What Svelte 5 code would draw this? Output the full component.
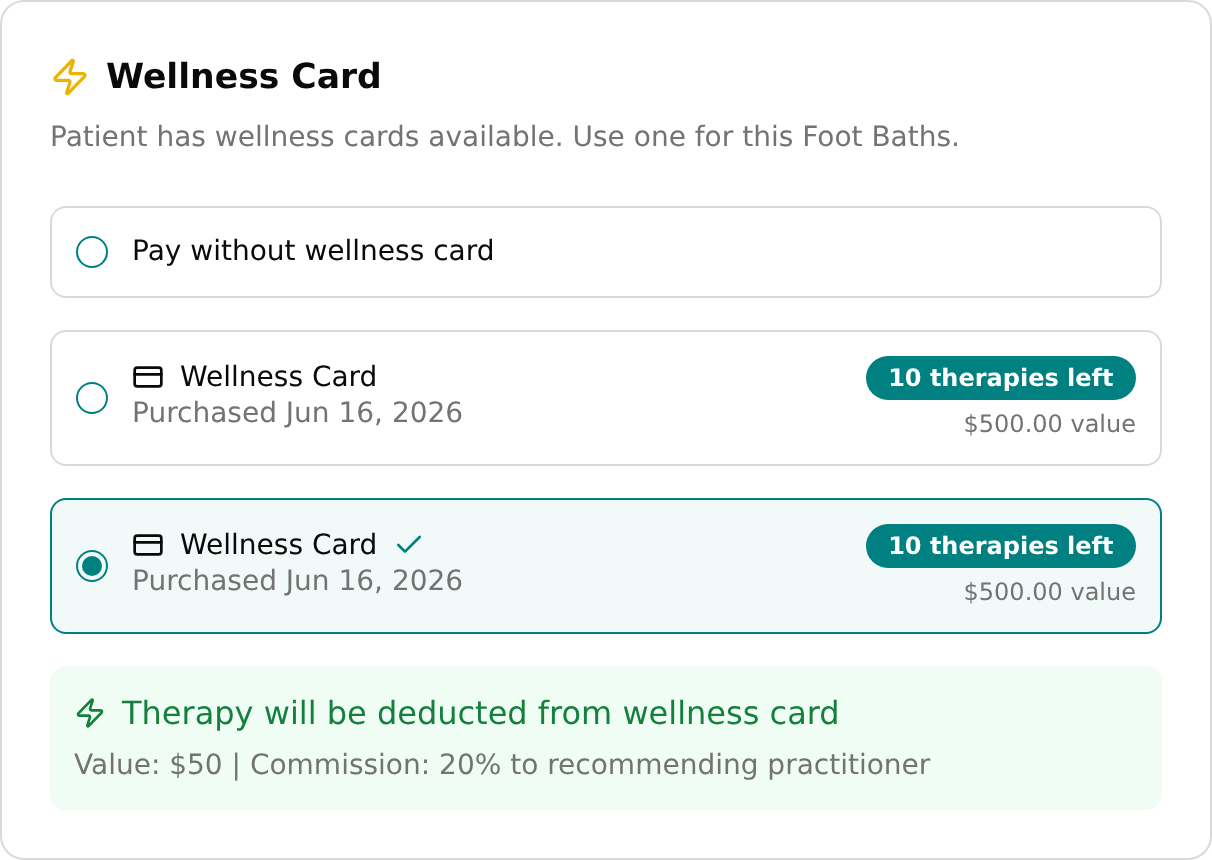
<script>
const options = [
  { id: 'card-1', selected: false },
  { id: 'card-2', selected: true }
];
const zap = 'M4 14a1 1 0 0 1-.78-1.63l9.9-10.2a.5.5 0 0 1 .86.46l-1.92 6.02A1 1 0 0 0 13 10h7a1 1 0 0 1 .78 1.63l-9.9 10.2a.5.5 0 0 1-.86-.46l1.92-6.02A1 1 0 0 0 11 14z';
</script>

<div class="card">
  <header class="head">
    <h2 class="title">
      <svg class="zap-lg" viewBox="0 0 24 24"><path d={zap} /></svg>
      Wellness Card
    </h2>
    <p class="desc">Patient has wellness cards available. Use one for this Foot Baths.</p>
  </header>

  <div class="list">
    <div class="option plain">
      <span class="radio"></span>
      <span class="label">Pay without wellness card</span>
    </div>

    {#each options as o (o.id)}
      <div class="option" class:selected={o.selected}>
        <span class="radio">
          {#if o.selected}<span class="dot"></span>{/if}
        </span>
        <div class="info">
          <div class="name">
            <svg class="icon" viewBox="0 0 24 24"><rect x="2" y="5" width="20" height="14" rx="2" /><line x1="2" y1="10" x2="22" y2="10" /></svg>
            <span>Wellness Card</span>
            {#if o.selected}
              <svg class="icon check" viewBox="0 0 24 24"><path d="M20 6 9 17l-5-5" /></svg>
            {/if}
          </div>
          <div class="sub">Purchased Jun 16, 2026</div>
        </div>
        <div class="side">
          <span class="badge">10 therapies left</span>
          <span class="value">$500.00 value</span>
        </div>
      </div>
    {/each}

    <div class="notice">
      <div class="notice-title">
        <svg class="zap-sm" viewBox="0 0 24 24"><path d={zap} /></svg>
        Therapy will be deducted from wellness card
      </div>
      <p class="notice-text">Value: $50 | Commission: 20% to recommending practitioner</p>
    </div>
  </div>
</div>

<style>
:global(body) {
  margin: 0;
}
.card {
  box-sizing: border-box;
  width: 1212px;
  height: 860px;
  padding: 48px;
  border: 2px solid #dadada;
  border-radius: 24px;
  background: #fff;
  color: #0a0a0a;
  font-family: "DejaVu Sans", sans-serif;
  text-rendering: geometricPrecision;
  will-change: transform;
}
.head {
  display: flex;
  flex-direction: column;
  gap: 12px;
  margin-bottom: 48px;
}
.title {
  display: flex;
  align-items: center;
  gap: 16px;
  margin: 0;
  font-size: 34.6px;
  line-height: 54px;
  font-weight: 700;
}
.desc {
  margin: 0;
  font-size: 28px;
  line-height: 42px;
  color: #737373;
}
svg {
  fill: none;
  stroke: currentColor;
  stroke-linecap: round;
  stroke-linejoin: round;
  stroke-width: 2;
  flex: none;
}
.zap-lg {
  width: 40px;
  height: 40px;
  color: #eab308;
}
.zap-sm {
  width: 32px;
  height: 32px;
  color: #15803d;
}
.icon {
  width: 32px;
  height: 32px;
}
.check {
  color: #008080;
}
.list {
  display: flex;
  flex-direction: column;
  gap: 32px;
}
.option {
  display: flex;
  align-items: center;
  gap: 24px;
  padding: 24px;
  border: 2px solid #dadada;
  border-radius: 16px;
}
.option.selected {
  border-color: #008080;
  background: #f2f9f9;
}
.radio {
  box-sizing: border-box;
  display: flex;
  align-items: center;
  justify-content: center;
  flex: none;
  width: 32px;
  height: 32px;
  border: 2px solid #008080;
  border-radius: 50%;
}
.dot {
  width: 20px;
  height: 20px;
  border-radius: 50%;
  background: #008080;
}
.label {
  padding-bottom: 2px;
  font-size: 28px;
  line-height: 38px;
}
.info {
  flex: 1;
  min-width: 0;
  padding-bottom: 6px;
}
.name {
  display: flex;
  align-items: center;
  gap: 16px;
  font-size: 28px;
  line-height: 36px;
}
.sub {
  font-size: 28px;
  line-height: 36px;
  color: #737373;
}
.side {
  display: flex;
  flex-direction: column;
  align-items: flex-end;
  gap: 8px;
}
.badge {
  padding: 6px 22.5px;
  border-radius: 999px;
  background: #008080;
  color: #fff;
  font-size: 24px;
  line-height: 32px;
  font-weight: 700;
}
.value {
  font-size: 24px;
  line-height: 32px;
  color: #737373;
}
.notice {
  padding: 24px 24px 25px;
  border-radius: 16px;
  background: #f0fdf4;
}
.notice-title {
  display: flex;
  align-items: center;
  gap: 16px;
  font-size: 32px;
  line-height: 46px;
  color: #15803d;
}
.notice-text {
  margin: 9px 0 0;
  font-size: 28px;
  line-height: 40px;
  color: #737373;
}
</style>
